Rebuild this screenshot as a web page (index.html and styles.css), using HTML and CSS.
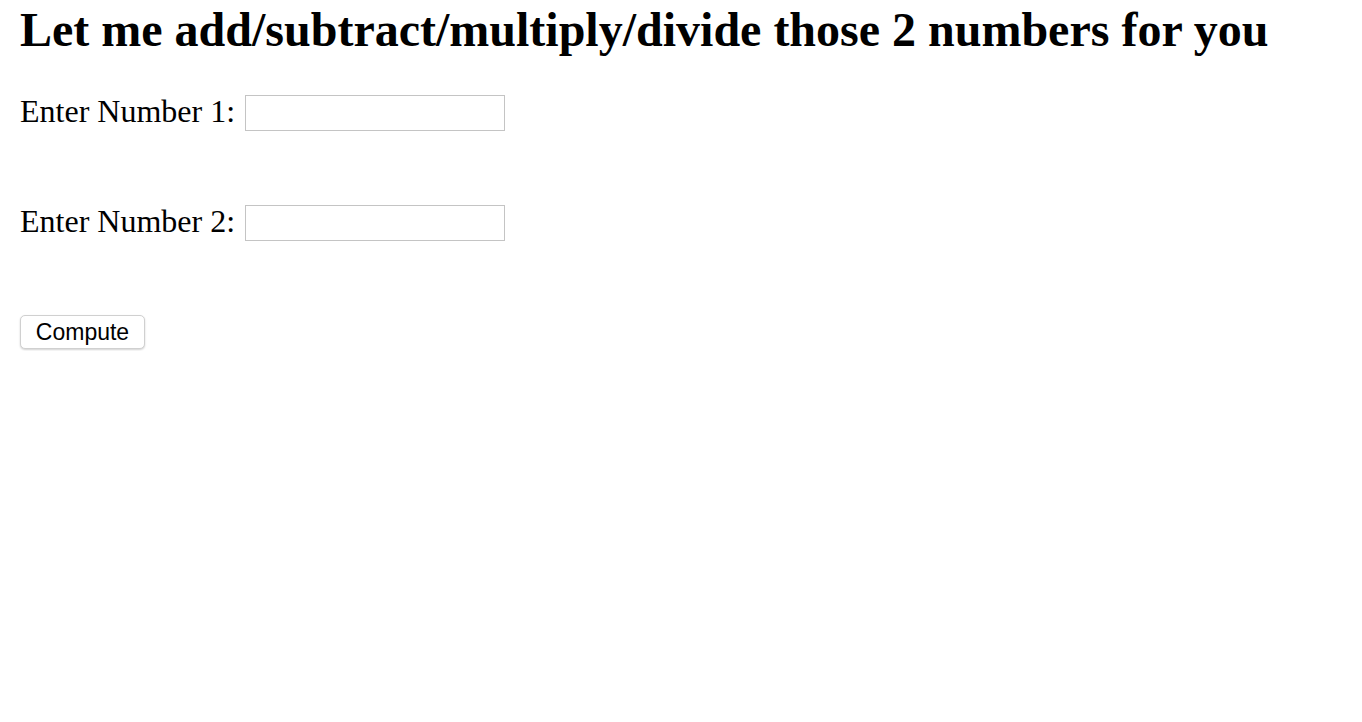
FILE: index.html
```html
<!DOCTYPE html>
<html>
<head>
<meta charset="utf-8">
<title>Calculator</title>
<link rel="stylesheet" href="styles.css">
</head>
<body>
<h1 class="title">Let me add/subtract/multiply/divide those 2 numbers for you</h1>
<form class="calc">
  <div class="row">
    <label class="label" for="n1">Enter Number 1:</label>
    <input class="field" id="n1" type="text">
  </div>
  <div class="row">
    <label class="label" for="n2">Enter Number 2:</label>
    <input class="field" id="n2" type="text">
  </div>
  <div class="row">
    <button class="btn" type="button">Compute</button>
  </div>
</form>
</body>
</html>
```
FILE: styles.css
```css
html, body {
  background: #fff;
}
body {
  margin: 0;
  padding: 0 20px;
  font-family: "Liberation Serif", "Times New Roman", serif;
  color: #000;
}
.title {
  font-size: 48px;
  font-weight: bold;
  line-height: 50px;
  margin: 5px 0 0 0;
}
.calc {
  display: flex;
  flex-direction: column;
  gap: 74px;
  margin-top: 40px;
}
.row {
  display: flex;
  align-items: flex-start;
  height: 36px;
}
.label {
  font-size: 32px;
  line-height: 33px;
  margin-right: 10px;
}
.field {
  box-sizing: border-box;
  width: 260px;
  height: 36px;
  margin: 0;
  border: 1px solid #c4c4c4;
  background: #fff;
  padding: 2px 4px;
  font-size: 22px;
  outline: none;
}
.btn {
  box-sizing: border-box;
  height: 34px;
  width: 125px;
  margin: 0;
  padding: 0 8px;
  font-family: "Liberation Sans", Arial, sans-serif;
  font-size: 23px;
  color: #000;
  background: #fff;
  border: 1px solid #d0d0d0;
  border-radius: 5px;
  box-shadow: 0 1px 2px rgba(0,0,0,0.18);
}
```
